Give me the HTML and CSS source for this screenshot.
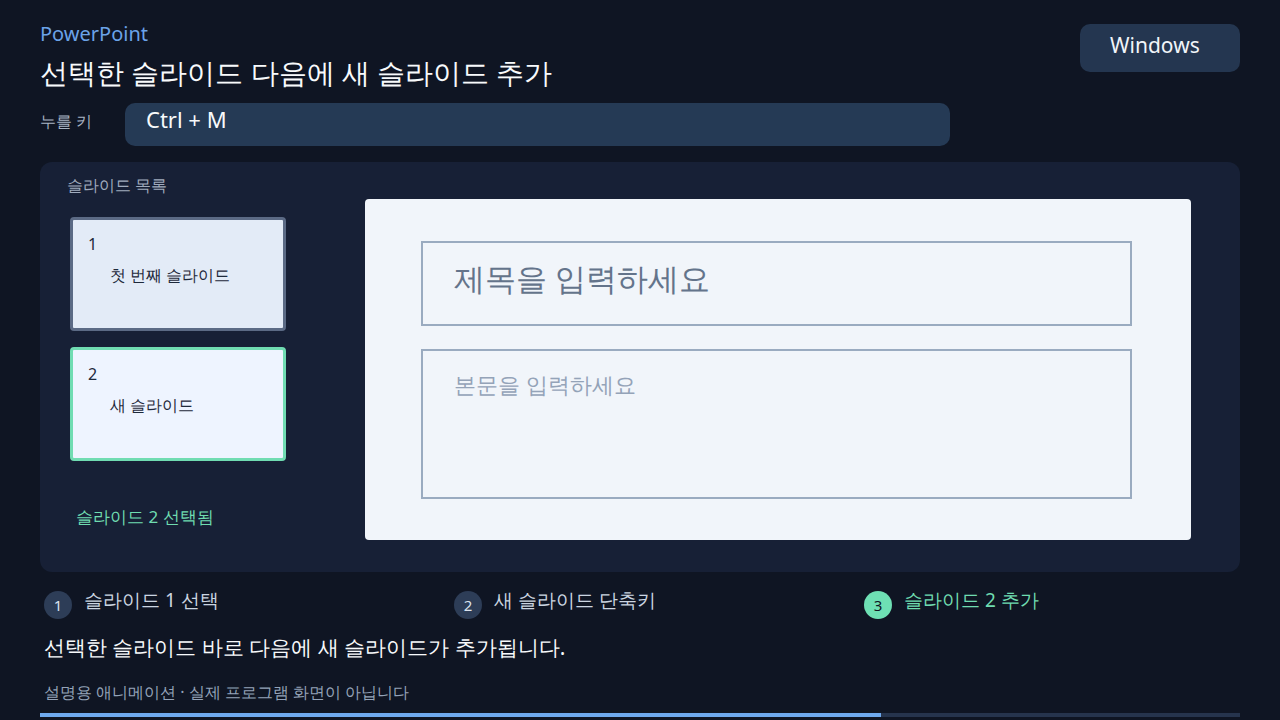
FILE: index.html
```html
<!DOCTYPE html>
<html>
<head>
<meta charset="utf-8">
<title>PowerPoint 단축키</title>
<link rel="stylesheet" href="styles.css">
</head>
<body>
<div class="page">
  <header class="header">
    <div class="heading">
      <div class="app">PowerPoint</div>
      <h1 class="title">선택한 슬라이드 다음에 새 슬라이드 추가</h1>
    </div>
    <div class="os">Windows</div>
  </header>

  <div class="keyrow">
    <div class="keylabel">누를 키</div>
    <div class="keybox">Ctrl + M</div>
  </div>

  <section class="panel">
    <div class="sidebar">
      <div class="sidebar-label">슬라이드 목록</div>
      <div class="thumb">
        <div class="thumb-num">1</div>
        <div class="thumb-text">첫 번째 슬라이드</div>
      </div>
      <div class="thumb thumb-active">
        <div class="thumb-num">2</div>
        <div class="thumb-text">새 슬라이드</div>
      </div>
      <div class="selected">슬라이드 2 선택됨</div>
    </div>
    <div class="slide">
      <div class="ph-title">제목을 입력하세요</div>
      <div class="ph-body">본문을 입력하세요</div>
    </div>
  </section>

  <div class="steps">
    <div class="step"><span class="dot">1</span><span class="step-text">슬라이드 1 선택</span></div>
    <div class="step"><span class="dot">2</span><span class="step-text">새 슬라이드 단축키</span></div>
    <div class="step step-done"><span class="dot">3</span><span class="step-text">슬라이드 2 추가</span></div>
  </div>

  <p class="desc">선택한 슬라이드 바로 다음에 새 슬라이드가 추가됩니다.</p>
  <p class="note">설명용 애니메이션 · 실제 프로그램 화면이 아닙니다</p>

  <div class="progress"><div class="progress-fill" style="width: 70.08%"></div></div>
</div>
</body>
</html>
```

FILE: styles.css
```css
* { box-sizing: border-box; }

html, body {
  margin: 0;
  padding: 0;
  background: #0f1523;
  width: 1280px;
  height: 720px;
  overflow: hidden;
}

body {
  font-family: "Noto Sans", sans-serif;
  color: #f1f5f9;
}

.page {
  padding: 22px 40px 0;
}

.header {
  display: flex;
  justify-content: space-between;
  align-items: flex-start;
}

.app {
  font-size: 20px;
  line-height: 24px;
  color: #6ba3e8;
}

.title {
  margin: 8px 0 0;
  font-size: 28px;
  line-height: 36px;
  font-weight: 400;
  color: #f8fafc;
}

.os {
  margin-top: 2px;
  width: 160px;
  height: 48px;
  padding: 0 0 5px 30px;
  line-height: 43px;
  font-size: 21px;
  background: #243650;
  border-radius: 10px;
  color: #f1f5f9;
}

.keyrow {
  display: flex;
  align-items: flex-start;
  margin-top: 13px;
}

.keylabel {
  width: 85px;
  font-size: 16px;
  line-height: 37px;
  color: #a8b3c4;
}

.keybox {
  width: 825px;
  height: 43px;
  padding-left: 21px;
  font-size: 22px;
  line-height: 33px;
  background: #253a55;
  border-radius: 10px;
  color: #f8fafc;
}

.panel {
  display: flex;
  align-items: flex-start;
  gap: 79px;
  margin-top: 16px;
  height: 410px;
  padding: 12px 49px 0 30px;
  background: #172036;
  border-radius: 12px;
}

.sidebar {
  width: 216px;
  flex-shrink: 0;
  display: flex;
  flex-direction: column;
}

.sidebar-label {
  margin-left: -3px;
  font-size: 16px;
  line-height: 22px;
  color: #a0abbd;
}

.thumb {
  height: 114px;
  margin-top: 16px;
  padding: 14px 0 0 15px;
  background: #e3ebf7;
  border: 3px solid #5b6a85;
  border-radius: 4px;
  color: #1e293b;
}

.sidebar-label + .thumb { margin-top: 21px; }

.thumb-active {
  background: #eef4ff;
  border-color: #70dcb2;
}

.thumb-num {
  font-size: 16px;
  line-height: 20px;
}

.thumb-text {
  margin-top: 10px;
  padding-left: 22px;
  font-size: 16px;
  line-height: 22px;
}

.selected {
  margin-top: 44px;
  padding-left: 6px;
  font-size: 17px;
  line-height: 24px;
  color: #6fdcb0;
}

.slide {
  width: 826px;
  height: 341px;
  flex-shrink: 0;
  margin-top: 25px;
  padding: 42px 59px 0 56px;
  background: #f1f5fa;
  border-radius: 4px;
}

.ph-title {
  height: 85px;
  padding: 15px 0 0 31px;
  border: 2px solid #9aabc0;
  font-size: 31px;
  line-height: 40px;
  color: #64748b;
}

.ph-body {
  height: 150px;
  margin-top: 23px;
  padding: 18px 0 0 31px;
  border: 2px solid #9aabc0;
  font-size: 22px;
  line-height: 30px;
  color: #94a3b8;
}

.steps {
  display: flex;
  margin-top: 14px;
  padding-left: 4px;
}

.step {
  width: 410px;
  flex-shrink: 0;
  display: flex;
  align-items: flex-start;
  gap: 12px;
}

.dot {
  width: 28px;
  height: 28px;
  margin-top: 5px;
  border-radius: 50%;
  background: #2d3d57;
  color: #dbe3ee;
  font-size: 15px;
  line-height: 28px;
  text-align: center;
}

.step-text {
  font-size: 19px;
  line-height: 28px;
  color: #cbd5e1;
}

.step-done .dot {
  background: #6ee0b4;
  color: #0f1523;
}

.step-done .step-text {
  color: #6fdcb0;
}

.desc {
  margin: 13px 0 0;
  padding-left: 4px;
  font-size: 21px;
  line-height: 30px;
  color: #f8fafc;
}

.note {
  margin: 19px 0 0;
  padding-left: 4px;
  font-size: 16px;
  line-height: 22px;
  color: #94a3b8;
}

.progress {
  margin-top: 10px;
  height: 4px;
  background: #26344d;
}

.progress-fill {
  height: 100%;
  background: #6ea9ee;
}
```
